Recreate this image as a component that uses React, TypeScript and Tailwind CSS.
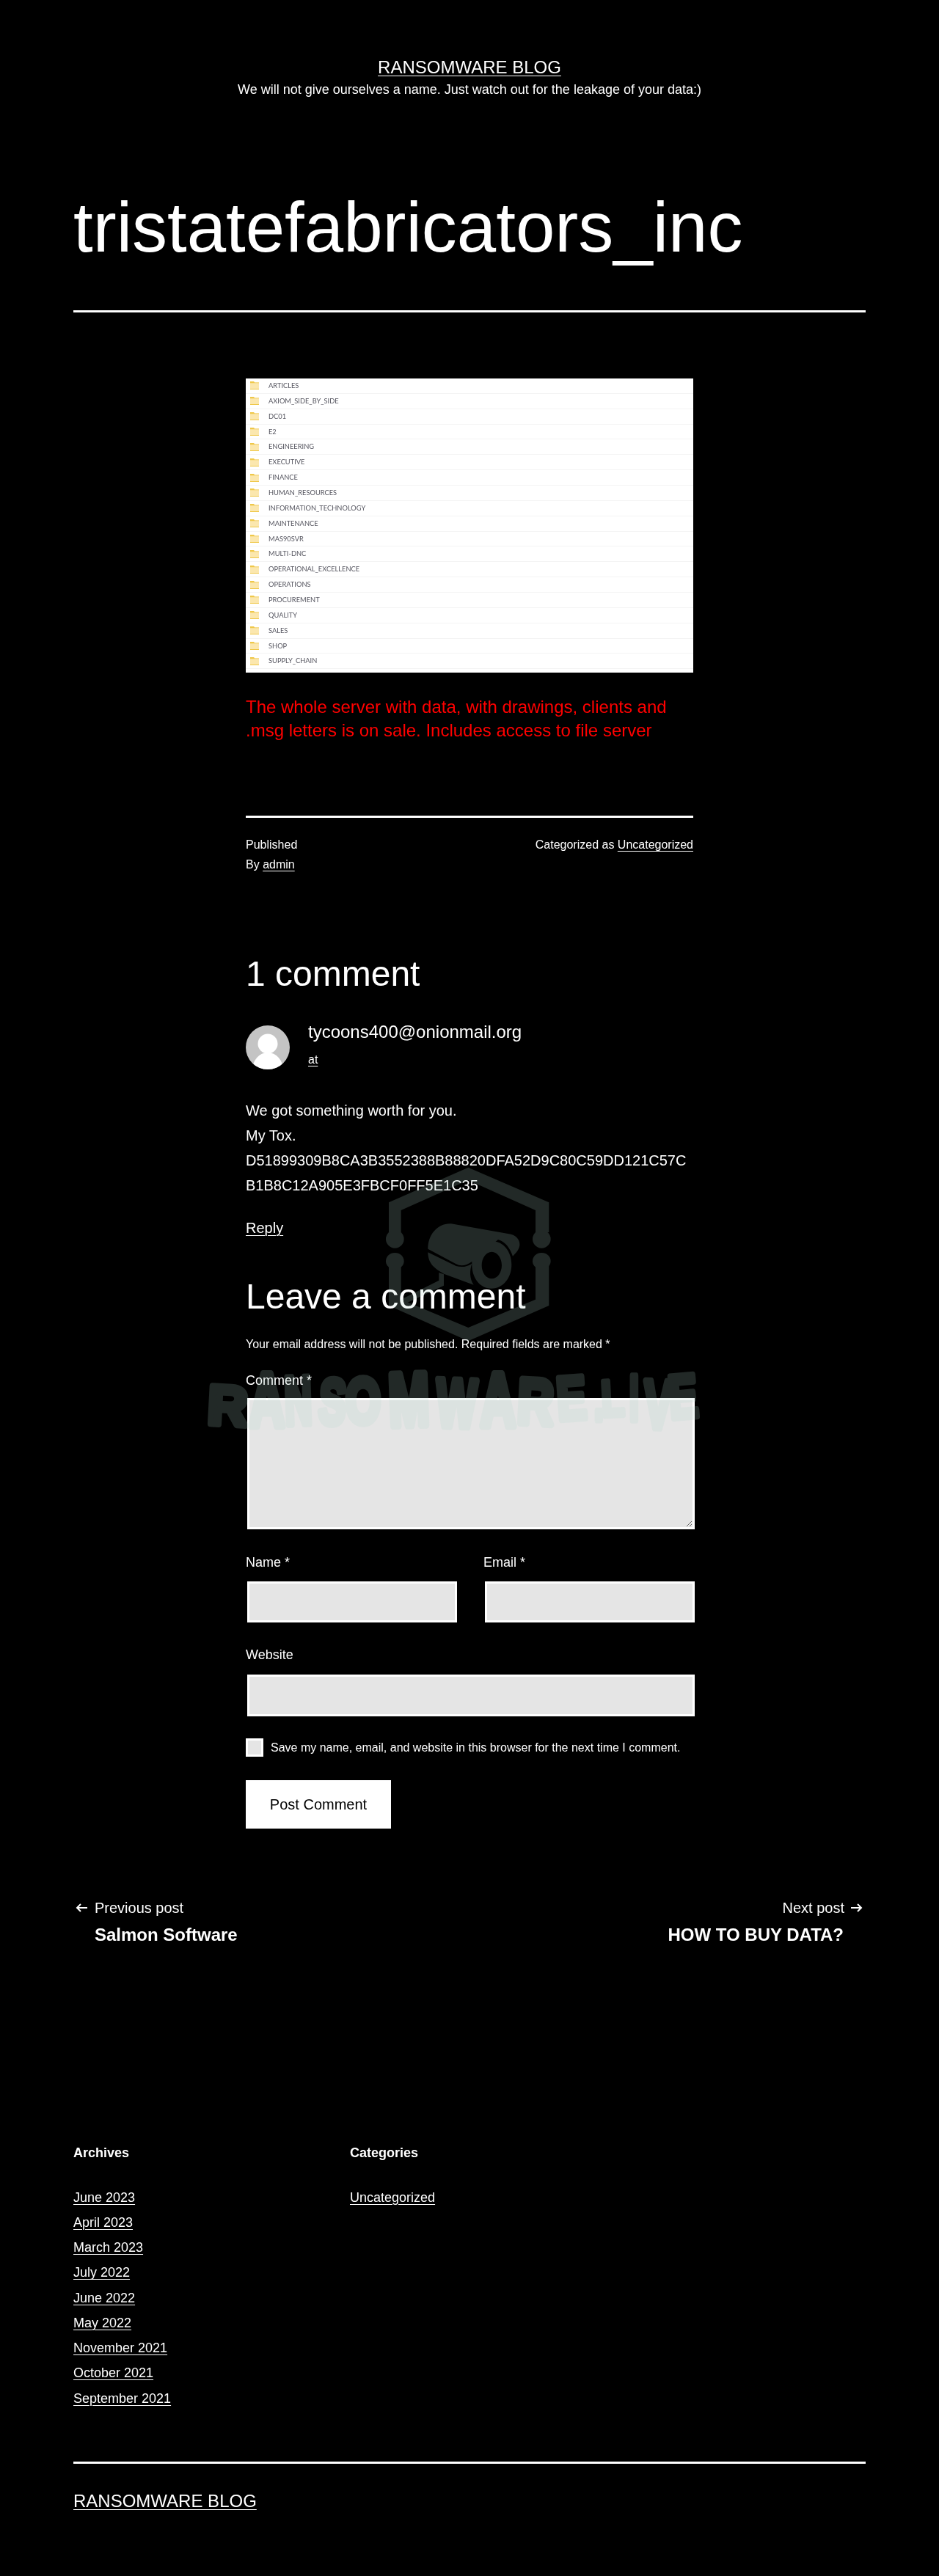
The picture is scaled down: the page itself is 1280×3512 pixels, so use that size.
const folders = [
  "ARTICLES",
  "AXIOM_SIDE_BY_SIDE",
  "DC01",
  "E2",
  "ENGINEERING",
  "EXECUTIVE",
  "FINANCE",
  "HUMAN_RESOURCES",
  "INFORMATION_TECHNOLOGY",
  "MAINTENANCE",
  "MAS90SVR",
  "MULTI-DNC",
  "OPERATIONAL_EXCELLENCE",
  "OPERATIONS",
  "PROCUREMENT",
  "QUALITY",
  "SALES",
  "SHOP",
  "SUPPLY_CHAIN",
];

const archives = [
  "June 2023",
  "April 2023",
  "March 2023",
  "July 2022",
  "June 2022",
  "May 2022",
  "November 2021",
  "October 2021",
  "September 2021",
];

// brush lettering of the watermark: letter, x, baseline, x scale, y scale, rotation
const brush: [string, number, number, number, number, number][] = [
  ["R", 12, 351, 0.82, 0.82, 3],
  ["A", 70, 354, 0.72, 1.11, 0],
  ["N", 119, 352, 0.56, 1.0, -2],
  ["S", 163, 350, 0.6, 0.95, 4],
  ["O", 201, 350, 0.67, 0.95, 0],
  ["M", 261, 354, 0.72, 1.1, -2],
  ["W", 324, 354, 0.63, 1.0, 2],
  ["A", 385, 354, 0.72, 1.11, 0],
  ["R", 434, 350, 0.74, 0.95, 3],
  ["E", 491, 346, 0.65, 0.9, -4],
  [".", 540, 346, 0.5, 0.9, 0],
  ["L", 551, 341, 0.55, 0.75, -3],
  ["I", 588, 346, 0.5, 0.95, 0],
  ["V", 607, 356, 0.62, 1.0, 2],
  ["E", 644, 344, 0.64, 0.9, -5],
];

const link = "underline underline-offset-[3px] decoration-1";
const label = "block text-[18px] leading-[27px]";
const field = "ml-[2px] block w-full rounded-none border-[3px] border-white bg-[#e5e5e5]";

function FolderRow({ name }: { name: string }) {
  return (
    <div className="flex h-[20.87px] items-center border-b border-[#f4f4f4] pl-[6px]">
      <svg width="12" height="11" viewBox="0 0 12 11" className="shrink-0">
        <path d="M0 0h5l1 1.5h6V11H0z" fill="#fbe7ae" />
        <path d="M0 10h12v1H0z M0 0h5l1 1.5h6v.7H0z" fill="#efc84a" />
      </svg>
      <span className="ml-[13px] font-['Lato',sans-serif] text-[9.3px] text-[#55555f]">{name}</span>
    </div>
  );
}

function Watermark() {
  return (
    <div className="pointer-events-none absolute left-[270px] top-[1590px] h-[370px] w-[700px] opacity-[0.19]">
      <svg viewBox="0 0 700 370" width="700" height="370" fill="#b4d7cd">
        <g transform="translate(230 -10) scale(0.3333)">
          <path d="M90 178 415 35 745 178V300H690V210L415 87 140 210V300H90Z" />
          <path d="M90 420H140V575L415 690 690 575V420H745V600L415 745 90 600Z" />
          <ellipse cx="115" cy="328" rx="37" ry="37" />
          <ellipse cx="715" cy="328" rx="37" ry="37" />
          <ellipse cx="115" cy="418" rx="37" ry="34" />
          <ellipse cx="715" cy="418" rx="37" ry="34" />
          <path d="M250 368C250 310 290 262 345 265L590 308C615 315 628 335 625 355 622 372 610 385 597 398 585 362 565 338 537 330L430 420Q395 445 365 430Z" />
          <path d="M250 382 365 438Q400 448 430 428C420 455 420 490 437 515L315 470C280 450 250 430 250 382Z" />
          <path
            fillRule="evenodd"
            d="M510 336C560 336 592 380 592 432S560 530 510 530 430 484 430 432 460 336 510 336ZM511 380C488 380 470 405 470 435S488 490 511 490 552 465 552 435 534 380 511 380Z"
          />
          <path d="M315 472V518L140 600V575L295 497V465Z" />
        </g>
        <g
          fontFamily="Liberation Sans, sans-serif"
          fontWeight="700"
          fontSize="92"
          stroke="#b4d7cd"
          strokeWidth="10"
          strokeLinejoin="round"
        >
          {brush.map(([letter, x, y, scaleX, scaleY, turn], index) => (
            <text key={index} transform={`translate(${x} ${y}) rotate(${turn}) scale(${scaleX} ${scaleY})`}>
              {letter}
            </text>
          ))}
        </g>
      </svg>
    </div>
  );
}

export default function App() {
  return (
    <div className="h-[3512px] overflow-hidden bg-black font-['Liberation_Sans',Arial,sans-serif] text-[20px] leading-[34px] text-white">
      <div className="relative h-full will-change-transform">
        <header className="pt-[77px] text-center">
          <a className={`${link} block text-[24px] leading-[30px]`}>RANSOMWARE BLOG</a>
          <p className="mt-[2px] text-[18px] leading-[26px]">We will not give ourselves a name. Just watch out for the leakage of your data:)</p>
        </header>

        <div className="mx-[100px] mt-[117px] border-b-[3px] border-white pb-[56px]">
          <h1 className="text-[96px] font-light leading-[115px]">tristatefabricators_inc</h1>
        </div>

        <main className="mx-auto mt-[90px] w-[610px]">
          <div className="h-[401px] overflow-hidden bg-white">
            {folders.map((name) => (
              <FolderRow key={name} name={name} />
            ))}
          </div>
          <p className="mt-[31px] text-[24px] leading-[32px] text-[#ff0000]">
            The whole server with data, with drawings, clients and .msg letters is on sale. Includes access to file server
          </p>

          <div className="mt-[100px] flex justify-between border-t-[3px] border-white pt-[23px] text-[16px] leading-[27px]">
            <div>
              <div>Published</div>
              <div>
                By <a className={link}>admin</a>
              </div>
            </div>
            <div>
              Categorized as <a className={link}>Uncategorized</a>
            </div>
          </div>

          <h2 className="mt-[106px] text-[48px] font-light leading-[60px]">1 comment</h2>
          <div className="mt-[34px] flex">
            <svg width="60" height="60" viewBox="0 0 60 60" className="mt-[6px] shrink-0">
              <defs>
                <clipPath id="avatar">
                  <circle cx="30" cy="30" r="30" />
                </clipPath>
              </defs>
              <circle cx="30" cy="30" r="30" fill="#c4c4c4" />
              <g clipPath="url(#avatar)" fill="#fff">
                <circle cx="30" cy="25" r="13.5" />
                <ellipse cx="30" cy="61" rx="21" ry="24" />
              </g>
            </svg>
            <div className="ml-[25px]">
              <div className="text-[24px] leading-[30px]">tycoons400@onionmail.org</div>
              <a className={`${link} mt-[11px] block text-[16px] leading-[24px]`}>at</a>
            </div>
          </div>

          <div className="mt-[39px]">
            <p>We got something worth for you.</p>
            <p>My Tox.</p>
            <p className="break-all">D51899309B8CA3B3552388B88820DFA52D9C80C59DD121C57CB1B8C12A905E3FBCF0FF5E1C35</p>
          </div>
          <a className={`${link} mt-[24px] block`}>Reply</a>

          <h2 className="mt-[47px] text-[48px] font-light leading-[60px]">Leave a comment</h2>
          <p className="mt-[23px] text-[16px] leading-[24px]">Your email address will not be published. Required fields are marked *</p>
          <label className={`${label} mt-[24px]`}>Comment *</label>
          <textarea readOnly className={`${field} mt-[10px] h-[179px]`} />

          <div className="mt-[32px] flex gap-[38px]">
            <div className="w-[286px]">
              <label className={label}>Name *</label>
              <input readOnly className={`${field} mt-[12px] h-[56px]`} />
            </div>
            <div className="w-[286px]">
              <label className={label}>Email *</label>
              <input readOnly className={`${field} mt-[12px] h-[56px]`} />
            </div>
          </div>

          <label className={`${label} mt-[31px]`}>Website</label>
          <input readOnly className={`${field} mt-[13px] h-[57px]`} />

          <div className="mt-[30px] flex items-center">
            <input type="checkbox" readOnly className="h-[25px] w-[24px] appearance-none rounded-none border-[3px] border-white bg-[#e5e5e5]" />
            <span className="ml-[10px] text-[16px] leading-[24px]">Save my name, email, and website in this browser for the next time I comment.</span>
          </div>

          <button className="mt-[32px] block h-[66px] w-[198px] bg-white text-[20px] text-black">Post Comment</button>
        </main>

        <nav className="mx-[100px] mt-[94px] flex justify-between">
          <div>
            <div className="flex items-center text-[20px] leading-[28px]">
              <svg width="16" height="12" viewBox="0 0 16 12" fill="none" stroke="white" strokeWidth="2" className="ml-[3px] mr-[10px]">
                <path d="M16 6H2M7 1 2 6l5 5" />
              </svg>
              Previous post
            </div>
            <div className="ml-[29px] mt-[8px] text-[24px] font-bold leading-[30px]">Salmon Software</div>
          </div>
          <div className="text-right">
            <div className="flex items-center justify-end text-[20px] leading-[28px]">
              Next post
              <svg width="16" height="12" viewBox="0 0 16 12" fill="none" stroke="white" strokeWidth="2" className="ml-[9px] mr-[4px]">
                <path d="M0 6h14M9 1l5 5-5 5" />
              </svg>
            </div>
            <div className="mr-[30px] mt-[8px] text-[24px] font-bold leading-[30px]">HOW TO BUY DATA?</div>
          </div>
        </nav>

        <footer className="mx-[100px] mt-[270px]">
          <div className="grid grid-cols-[377px_1fr] text-[18px]">
            <div>
              <h3 className="font-bold leading-[24px]">Archives</h3>
              <ul className="mt-[31.5px] leading-[34.25px]">
                {archives.map((month) => (
                  <li key={month}>
                    <a className={link}>{month}</a>
                  </li>
                ))}
              </ul>
            </div>
            <div>
              <h3 className="font-bold leading-[24px]">Categories</h3>
              <ul className="mt-[31.5px] leading-[34.25px]">
                <li>
                  <a className={link}>Uncategorized</a>
                </li>
              </ul>
            </div>
          </div>
          <div className="mt-[69px] border-t-[3px] border-white pt-[36px] text-[24px] leading-[30px]">
            <a className={link}>RANSOMWARE BLOG</a>
          </div>
        </footer>

        <Watermark />
      </div>
    </div>
  );
}
